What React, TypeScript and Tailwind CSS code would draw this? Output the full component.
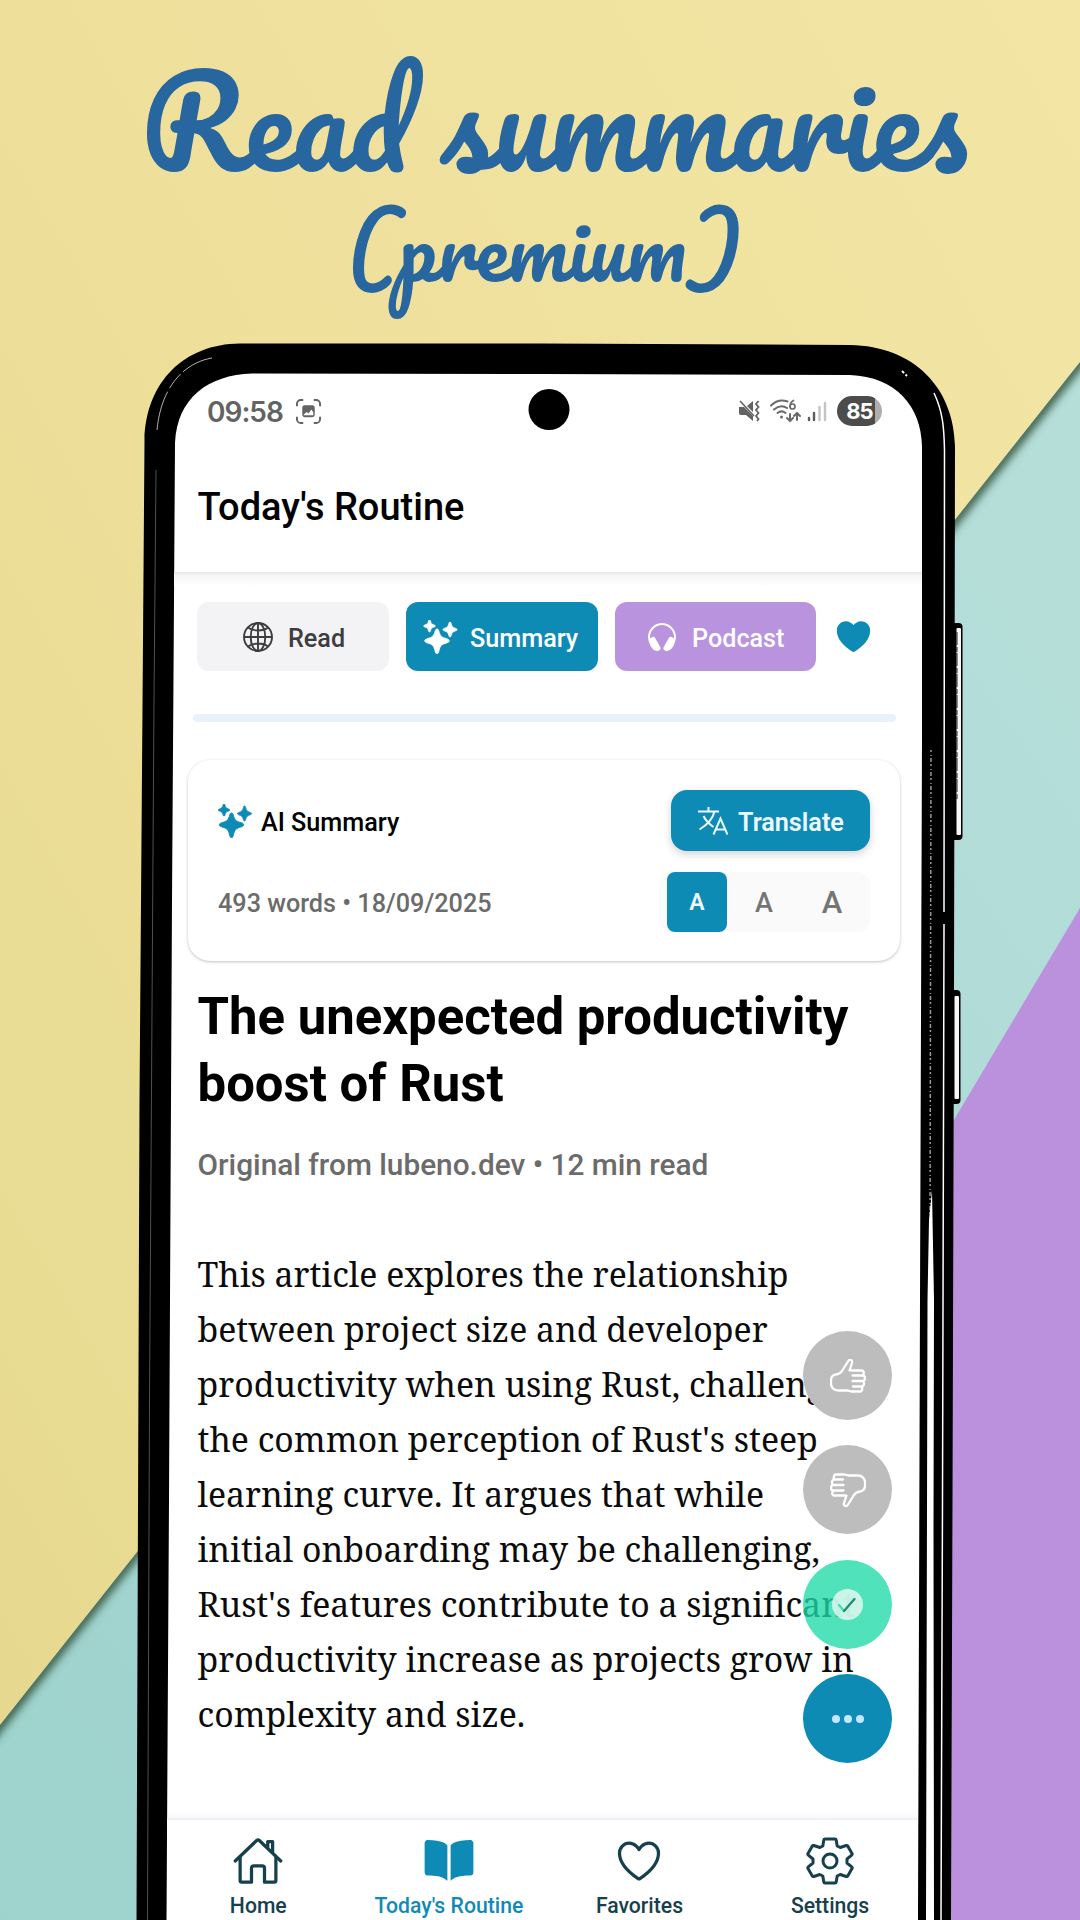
import React from 'react';
import { IoBook, IoHeadset, IoHeart, IoHeartOutline, IoHomeOutline } from 'react-icons/io5';

type IconProps = { className?: string };

const Backdrop = () => (
  <svg className="absolute inset-0 h-full w-full" viewBox="0 0 1080 1920" aria-hidden="true">
    <defs>
      <linearGradient id="yellow" x1="1" y1="0" x2="0" y2="1">
        <stop offset="0" stopColor="#f3e5a4" />
        <stop offset="0.5" stopColor="#eee09b" />
        <stop offset="1" stopColor="#e5d88d" />
      </linearGradient>
      <linearGradient id="teal" x1="1" y1="0" x2="0" y2="1">
        <stop offset="0" stopColor="#b7dfda" />
        <stop offset="1" stopColor="#9dd2cd" />
      </linearGradient>
      <filter id="soft" x="-5%" y="-5%" width="110%" height="110%">
        <feGaussianBlur stdDeviation="4" />
      </filter>
      <clipPath id="tealArea">
        <path d="M1080 362 0 1725V1920H1080Z" />
      </clipPath>
    </defs>
    <rect width="1080" height="1920" fill="url(#yellow)" />
    <path d="M1080 362 0 1725V1920H1080Z" fill="url(#teal)" />
    <g clipPath="url(#tealArea)">
      <path d="M1100 337-20 1750" stroke="#35573f" strokeWidth="10" filter="url(#soft)" />
    </g>
    <path d="M1080 908 600 1715V1920H1080Z" fill="#bb91de" />
  </svg>
);

const PhoneBody = () => (
  <svg className="absolute inset-0 h-full w-full" viewBox="0 0 1080 1920" aria-hidden="true">
    <rect x="950" y="623" width="12.500" height="217" rx="4" fill="#000" />
    <rect x="956.500" y="628" width="4.500" height="207" rx="1" fill="#f7f7f7" />
    <path d="M957 632V800" stroke="#222" strokeWidth="1" strokeDasharray="13 2 5 1" />
    <rect x="948" y="990" width="12.500" height="114" rx="4" fill="#000" />
    <rect x="954.500" y="996" width="4.500" height="103" rx="1" fill="#f7f7f7" />
    <path
      d="M136.500 1920 139.500 1100 143 640 144.500 440C146 382 184 344 240 343.500L540 343.500 850 345C914 346 954 388 955 446L954 1000 952.500 1500 951 1920Z"
      fill="#000"
    />
    <path
      d="M166.500 1920 169 1500 172 900 174 600 175 443C177 398 208 375 252 373.500L540 374 850 375C896 377 921 406 922 446L922 740 920 1300 918 1920Z"
      fill="#fff"
    />
    <path d="M157 430C161 388 183 363 212 358" fill="none" stroke="#ddd" strokeWidth="0.800" strokeDasharray="40 4 18 3" />
    <path d="M156 470 154 700 149.500 1400 147.500 1920" fill="none" stroke="#666" strokeWidth="0.800" />
    <path d="M934 393C943 412 944 428 944.500 450L944 912M944 924 942.500 1500 941 1920" fill="none" stroke="#fff" strokeWidth="1.500" />
    <path d="M931 750 930 1250" stroke="#999" strokeWidth="1.500" strokeDasharray="2 3 1 2 4 2" />
    <path d="M929 1220 932 1190 934 1300 933.500 1530 934 1920H926L927.500 1300Z" fill="#fff" />
    <path d="M902 371 907 376" stroke="#fff" strokeWidth="2" strokeDasharray="3 2" />
    <circle cx="549" cy="409.500" r="20.500" fill="#000" />
  </svg>
);

const CaptureIcon = ({ className }: IconProps) => (
  <svg className={className} viewBox="0 0 26 26" fill="none" stroke="#636363" strokeWidth="2">
    <path d="M1 7.500V5a4 4 0 0 1 4-4h2.500M18.500 1H21a4 4 0 0 1 4 4v2.500M25 18.500V21a4 4 0 0 1-4 4h-2.500M7.500 25H5a4 4 0 0 1-4-4v-2.500" />
    <rect x="6.500" y="6.500" width="13" height="12.500" rx="2.500" fill="#636363" stroke="none" />
    <path d="m8 16.500 3-3 2 1.500 3-4 2 3V17H8Z" fill="#fff" stroke="none" />
  </svg>
);

const MuteVibrateIcon = ({ className }: IconProps) => (
  <svg className={className} viewBox="0 0 22 22">
    <path d="M1 7h5l9 9v5l-7-6H3a2 2 0 0 1-2-2ZM9 6l6-5v11Z" fill="#636363" />
    <path d="m2 1 14 15" stroke="#636363" strokeWidth="1.600" />
    <path d="m20.500 1-2.500 3 2.500 3-2.500 3 2.500 3-2.500 3 2.500 3-1.500 2" fill="none" stroke="#636363" strokeWidth="1.800" />
  </svg>
);

const WifiIcon = ({ className }: IconProps) => (
  <svg className={className} viewBox="0 0 31 24" fill="none" stroke="#6a6a6a" strokeWidth="2" strokeLinecap="round">
    <path d="M1 6.500C6 1.500 12 .500 17.500 2.500M4 10.500C8 7 13 6.500 17 9M7.500 14C10 12 13 12 15.500 14" />
    <circle cx="11.500" cy="18" r="1.500" fill="#6a6a6a" stroke="none" />
    <path d="M23.500 1.500C21 3 20 5 20 7.500" strokeWidth="1.700" />
    <circle cx="22.500" cy="7.500" r="2.500" strokeWidth="1.700" />
    <path d="M20 15v7m-3-3 3 3 3-3M27 21v-7m-3 3 3-3 3 3" />
  </svg>
);

const SignalIcon = ({ className }: IconProps) => (
  <svg className={className} viewBox="0 0 20 21" strokeWidth="2.400" strokeLinecap="round">
    <path d="M2 17v2M7 12v7" stroke="#5a5a5a" />
    <path d="M12.500 6v13M18 2v17" stroke="#c4c4c4" />
  </svg>
);

const SparklesIcon = ({ className }: IconProps) => (
  <svg className={className} viewBox="0 0 34 34" fill="currentColor">
    <path d="M13.500 9c1 0 1.400.6 1.700 1.700 1.500 5.400 2.300 6.300 8.500 8.200 1.200.4 2 .9 2 1.900s-.8 1.500-2 1.900c-6.200 1.900-7 2.800-8.500 9-.3 1.200-.7 2-1.700 2s-1.400-.8-1.700-2c-1.500-6.200-2.300-7.100-8.500-9-1.200-.4-2-.9-2-1.900s.8-1.500 2-1.900c6.200-1.900 7-2.800 8.500-8.200.3-1.100.7-1.700 1.700-1.700Z" stroke="currentColor" strokeWidth="0.900" />
    <path d="M6 0c.6 0 .8.400 1 1 .7 2.700 1.200 3.100 3.800 4 .7.200 1 .5 1 1s-.3.800-1 1C8.200 7.900 7.700 8.300 7 11c-.2.700-.4 1-1 1s-.8-.3-1-1c-.7-2.700-1.200-3.100-3.800-4-.7-.2-1-.5-1-1s.3-.8 1-1C3.800 4.100 4.300 3.700 5 1c.2-.6.400-1 1-1ZM26.500 2c.6 0 .9.500 1.100 1.200 1 3.600 1.400 4 4.700 5.200.9.300 1.300.6 1.300 1.200s-.4.900-1.300 1.200c-3.300 1.200-3.700 1.600-4.700 4.900-.2.800-.5 1.300-1.100 1.300s-.9-.5-1.100-1.300c-1-3.300-1.400-3.700-4.700-4.900-.9-.3-1.300-.6-1.300-1.200s.4-.9 1.300-1.200c3.300-1.200 3.700-1.600 4.700-5.200.2-.7.500-1.200 1.100-1.200Z" stroke="currentColor" strokeWidth="0.700" />
  </svg>
);

const GlobeIcon = ({ className }: IconProps) => (
  <svg className={className} viewBox="0 0 30 30" fill="none" stroke="currentColor" strokeWidth="1.900">
    <circle cx="15" cy="15" r="14" />
    <ellipse cx="15" cy="15" rx="7.300" ry="14" />
    <path d="M15 1v28M1 15h28M5 5.500C10 9.500 20 9.500 25 5.500M5 24.500C10 20.500 20 20.500 25 24.500" />
  </svg>
);

const TranslateIcon = ({ className }: IconProps) => (
  <svg className={className} viewBox="0 0 30 28" fill="none" stroke="currentColor" strokeWidth="2">
    <path d="M0 4.500h21M10.500 0v4.500M16.500 4.500C14.500 13 8 18.500 1.500 22.500M5.500 9C8 14.500 12 17.500 15.500 20M15.500 27.500 22.500 11.500 29.500 27.500M18 22.500h9" />
  </svg>
);

const ThumbIcon = ({ className }: IconProps) => (
  <svg className={className} viewBox="0 0 36 34" fill="none" stroke="#fff" strokeWidth="2.300" strokeLinecap="round" strokeLinejoin="round">
    <path d="M21.500 11.500h10c3 0 3 5 0 5h-9M31.500 16.500h1c3.400 0 3.400 5.500 0 5.500h-10M32 22c3 0 2.500 5.500-.500 5.500h-8.500M31 27.500c2 0 1.500 5-1 5H22c-2 0-3-1-5-1H8c-4 0-7-3-7-7v-3.500c0-4 3-5.500 7-6 2-.400 3-1.500 4-3L18 2.500c1.500-3 5-1.500 4 1.500l-2.500 7.500" />
  </svg>
);

const CheckIcon = ({ className }: IconProps) => (
  <svg className={className} viewBox="0 0 31 31">
    <circle cx="15.500" cy="15.500" r="15.500" fill="#dcf7ee" fillOpacity="0.880" />
    <path d="m7 16 5 6" stroke="#43dcb4" strokeWidth="2.300" strokeLinecap="round" />
    <path d="M12 22 22.500 10" stroke="#258b70" strokeWidth="2.300" strokeLinecap="round" />
  </svg>
);

const GearIcon = ({ className }: IconProps) => (
  <svg className={className} viewBox="0 0 48 48" fill="none" stroke="currentColor" strokeWidth="3" strokeLinejoin="round">
    <path d="M19 2h10q1 0 1.200 1l1 6 3 1.500 6-2q1-.3 1.500.6l4.300 7.400q.5 1-.3 1.600L41 22v4l4.700 3.900q.8.600.3 1.600l-4.300 7.400q-.5.900-1.500.6l-6-2-3 1.500-1 6q-.2 1-1.200 1H19q-1 0-1.200-1l-1-6-3-1.500-6 2q-1 .3-1.500-.6L2 31.500q-.5-1 .3-1.600L7 26v-4l-4.700-3.900Q1.500 17.500 2 16.500l4.300-7.400q.5-.9 1.500-.6l6 2 3-1.500 1-6Q18 2 19 2Z" />
    <circle cx="24" cy="24" r="7" />
  </svg>
);

const StatusBar = () => (
  <div className="mt-[21px] flex h-[32px] items-center pr-[198px] pl-[207px]">
    <span className="w-[76px] pt-px font-['Inter'] text-[28px] leading-none font-semibold tracking-[-1px] text-[#636363]">09:58</span>
    <CaptureIcon className="ml-[13px] h-[25px] w-[25px]" />
    <div className="ml-auto flex items-center">
      <MuteVibrateIcon className="h-[22px] w-[22px]" />
      <WifiIcon className="ml-[10px] h-[24px] w-[31px]" />
      <SignalIcon className="ml-[6px] h-[21px] w-[20px]" />
      <div className="ml-[10px] flex h-[30px] w-[45px] items-center justify-center rounded-full bg-[linear-gradient(90deg,#4c4c4c_84%,#aeaeae_84%)] font-['Inter'] text-[22px] leading-none font-bold tracking-[-1px] text-white">
        85
      </div>
    </div>
  </div>
);

const ModeTabs = () => (
  <div className="mt-[30px] flex h-[69px] items-center text-[25.2px] font-medium text-white">
    <button className="flex h-full w-[192px] items-center rounded-xl bg-[#f3f3f6] pl-[46px] text-[#3d3d3f]">
      <GlobeIcon className="h-[30px] w-[30px]" />
      <span className="mt-[4px] ml-[15px]">Read</span>
    </button>
    <button className="ml-[17px] flex h-full w-[192px] items-center rounded-xl bg-[#0e8bb5] pl-[17px]">
      <SparklesIcon className="h-[34px] w-[35px]" />
      <span className="mt-[4px] ml-[12px]">Summary</span>
    </button>
    <button className="ml-[17px] flex h-full w-[201px] items-center rounded-xl bg-[#ba93de] pl-[31px]">
      <IoHeadset className="h-[32px] w-[32px]" />
      <span className="mt-[4px] ml-[14px]">Podcast</span>
    </button>
    <IoHeart className="ml-[17px] h-[41px] w-[41px] text-[#0e8bb5]" />
  </div>
);

const SummaryCard = () => (
  <section className="mt-[38px] -ml-[9px] h-[201px] w-[712px] rounded-[22px] bg-white pt-[30px] pr-[30px] pl-[30px] shadow-[0_1px_3px_rgba(0,0,0,0.25)]">
    <div className="flex h-[61px] items-center">
      <SparklesIcon className="h-[34px] w-[34px] text-[#0e8bb5]" />
      <h2 className="mt-[4px] ml-[9px] text-[25.2px] font-medium text-black">AI Summary</h2>
      <button className="ml-auto flex h-full w-[199px] items-center rounded-2xl bg-[#0e8bb5] pl-[27px] text-[25.200px] font-semibold text-[#edf9ff] shadow-[0_3px_8px_rgba(0,0,0,0.18)]">
        <TranslateIcon className="h-[28px] w-[30px]" />
        <span className="mt-[4px] ml-[10px]">Translate</span>
      </button>
    </div>
    <div className="mt-[21px] flex h-[60px] items-center">
      <p className="mt-[3px] text-[25.2px] font-medium text-[#6b6b6b]">493 words • 18/09/2025</p>
      <div className="ml-auto flex h-full w-[211px] items-center rounded-xl bg-[#fafafa] pl-2 font-medium text-[#757575]">
        <button className="h-full w-[60px] rounded-lg bg-[#0e8bb5] pt-[3px] text-[23px] font-semibold text-[#edf9ff]">A</button>
        <button className="ml-[7px] h-full w-[60px] pt-[2px] text-[27px]">A</button>
        <button className="ml-[8px] h-full w-[60px] pt-[2px] text-[31px]">A</button>
      </div>
    </div>
  </section>
);

const lines = [
  'This article explores the relationship',
  'between project size and developer',
  'productivity when using Rust, challenging',
  "the common perception of Rust's steep",
  'learning curve. It argues that while',
  'initial onboarding may be challenging,',
  "Rust's features contribute to a significant",
  'productivity increase as projects grow in',
  'complexity and size.',
];

const Article = () => (
  <article className="mt-[22px] pl-[0.5px]">
    <h1 className="text-[50.9px] leading-[67px] font-bold text-black">
      The unexpected productivity
      <br />
      boost of Rust
    </h1>
    <p className="mt-[28px] text-[29.8px] leading-[40px] font-medium text-[#6b6b6b]">Original from lubeno.dev • 12 min read</p>
    <div className="mt-[61.5px] w-[719px] font-['Noto_Serif','DejaVu_Serif_Condensed','DejaVu_Serif',serif] text-[33.8px] leading-[55.1px] whitespace-nowrap text-[#0b0b0b]">
      {lines.map((line) => (
        <p key={line}>{line}</p>
      ))}
    </div>
  </article>
);

const circle = 'flex h-[89px] w-[89px] items-center justify-center rounded-full';

const FloatingActions = () => (
  <div className="absolute top-[1331px] left-[803px] flex flex-col gap-[25.4px]">
    <button className={`${circle} bg-[#bdbdbd]`}>
      <ThumbIcon className="h-[34px] w-[36px]" />
    </button>
    <button className={`${circle} bg-[#bdbdbd]`}>
      <ThumbIcon className="h-[34px] w-[36px] rotate-180" />
    </button>
    <button className={`${circle} bg-[#1edaa8]/78`}>
      <CheckIcon className="h-[31px] w-[31px]" />
    </button>
    <button className={`${circle} gap-[4px] bg-[#0e8bb5]`}>
      <i className="h-[8px] w-[8px] rounded-full bg-[#c4e8ff]" />
      <i className="h-[8px] w-[8px] rounded-full bg-[#c4e8ff]" />
      <i className="h-[8px] w-[8px] rounded-full bg-[#c4e8ff]" />
    </button>
  </div>
);

const tabClass = 'flex w-[190.6px] flex-col items-center';

const BottomNav = () => (
  <nav className="absolute top-[1818px] left-[167px] flex h-[102px] w-[751px] border-t-2 border-[#edf1fa] bg-white pt-[15px] text-[21.2px] leading-[26px] font-medium text-[#17404d] shadow-[0_-2px_6px_rgba(0,0,0,0.04)]">
    <div className="-ml-[4px] flex">
      <a className={tabClass}>
        <IoHomeOutline className="h-[52px] w-[52px]" />
        <span className="mt-[6px]">Home</span>
      </a>
      <a className={`${tabClass} text-[#0e8bb5]`}>
        <IoBook className="h-[52px] w-[52px]" />
        <span className="mt-[6px]">Today's Routine</span>
      </a>
      <a className={tabClass}>
        <IoHeartOutline className="h-[52px] w-[52px]" />
        <span className="mt-[6px]">Favorites</span>
      </a>
      <a className={tabClass}>
        <GearIcon className="my-[2px] h-[48px] w-[48px]" />
        <span className="mt-[6px]">Settings</span>
      </a>
    </div>
  </nav>
);

export default function App() {
  return (
    <div className="relative flex h-[1920px] w-[1080px] flex-col overflow-hidden font-['Roboto',sans-serif]">
      <Backdrop />
      <PhoneBody />
      <header className="relative h-[374px] pt-[55px] text-center font-['Pacifico',cursive] leading-none font-normal whitespace-nowrap text-[#2866a0]">
        <div className="pl-[28px] text-[121.5px] leading-[130px]">Read summaries</div>
        <div className="pt-[15px] pl-[8px] text-[82px] leading-[94px]">(premium)</div>
      </header>
      <div className="relative">
        <StatusBar />
        <div className="flex h-[145px] items-center pt-[15px] pl-[197.5px]">
          <h1 className="text-[38px] font-medium text-black">Today's Routine</h1>
        </div>
        <div className="ml-[174px] h-[14px] w-[748px] bg-gradient-to-b from-[#e6e6e6] via-[#f6f6f6] via-25% to-white" />
        <main className="-mt-[14px] ml-[197px] w-[703px]">
          <ModeTabs />
          <div className="mt-[43px] -ml-[4px] h-[8px] w-[703px] rounded-full bg-[#ebf1fc]" />
          <SummaryCard />
          <Article />
        </main>
      </div>
      <FloatingActions />
      <BottomNav />
    </div>
  );
}
